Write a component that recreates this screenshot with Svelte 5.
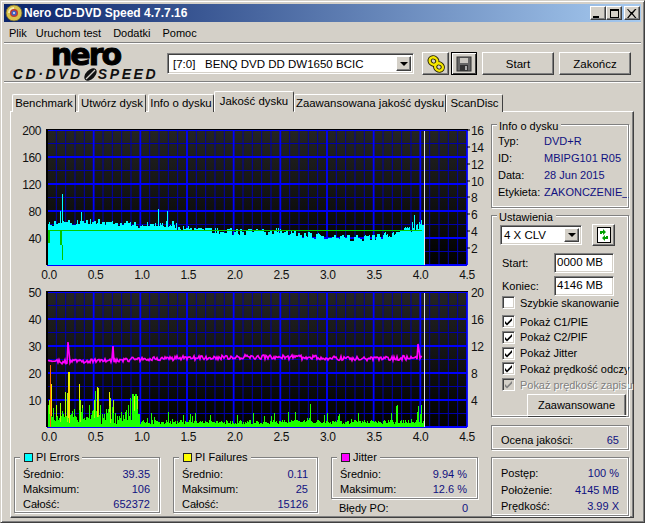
<script>
  function rng(seed) {
    return () => {
      seed = (seed + 0x6d2b79f5) | 0;
      let t = Math.imul(seed ^ (seed >>> 15), 1 | seed);
      t = (t + Math.imul(t ^ (t >>> 7), 61 | t)) ^ t;
      return ((t ^ (t >>> 14)) >>> 0) / 4294967296;
    };
  }
  function interp(pts, x) {
    for (let i = 1; i < pts.length; i++) {
      if (x <= pts[i][0]) {
        const [a, b] = pts[i - 1], [c, d] = pts[i];
        return b + ((d - b) * (x - a)) / (c - a);
      }
    }
    return pts[pts.length - 1][1];
  }
  const xOf = (v) => 47 + v * 93.33;
  const labelX = (v) => 49 + v * 92.9;
  const xTicks = [0, 0.5, 1, 1.5, 2, 2.5, 3, 3.5, 4, 4.5];
  const minorX = Array.from({ length: 46 }, (_, i) => 47 + i * 9.333);

  function grid(top) {
    const h = [];
    for (let i = 0; i <= 10; i++) h.push({ y: top + i * 13.5, major: i % 2 === 0 });
    return h;
  }
  const grid1 = grid(130);
  const grid2 = grid(292);

  // upper chart: PI errors
  const r1 = rng(11);
  const env1 = [[48, 224], [90, 222], [140, 225], [170, 224], [187, 229], [234, 232], [280, 231], [326, 238], [374, 238], [396, 233], [410, 229], [424, 225]];
  const spikes1 = { 49: 222, 62: 194, 60: 211, 81: 212, 158: 209, 167: 211, 414: 215, 421: 220, 412: 222, 419: 222 };
  let cyan = '';
  let held = 0;
  for (let x = 48; x < 424; x++) {
    if (x % 2 === 0 || r1() < 0.3) held = (r1() - 0.5) * 7;
    let y = Math.round(interp(env1, x) + held);
    if (spikes1[x]) y = spikes1[x];
    cyan += `M${x}.5 ${y}V265`;
  }
  // lower chart: PI failures + jitter
  const r2 = rng(29);
  const env3 = [[48, 362], [100, 361], [140, 359], [187, 358], [234, 357], [280, 357], [326, 358], [374, 359], [424, 357]];
  const jitterSpikes = { 68: 342, 69: 352, 113: 346, 418: 344, 419: 350 };
  let jitter = '';
  for (let x = 48; x < 423; x++) {
    const y = jitterSpikes[x] ?? +(interp(env3, x) + (r2() - 0.5) * 4.5).toFixed(1);
    jitter += `${x === 48 ? 'M' : 'L'}${x} ${y}`;
  }
  let green = '';
  for (let x = 48; x < 424; x++) {
    const early = x < 140;
    const burst = early ? (r2() < 0.55 ? 8 + r2() * 14 : 3 + r2() * 8) : r2() < 0.14 ? 7 + r2() * 8 : 3 + r2() * 4;
    green += `M${x}.5 ${427 - Math.round(burst)}V427`;
  }
  for (const [x, y] of [[95, 391], [130, 398], [132, 394], [133, 394], [135, 394], [136, 394], [310, 404], [396, 406], [397, 405], [418, 406], [421, 405]]) {
    green += `M${x}.5 ${y}V427`;
  }
  const lime = [[49, 400], [56, 405], [60, 403], [65, 392], [67, 393], [79, 392], [80, 400], [82, 405], [94, 400], [98, 388], [109, 392], [110, 398], [113, 400], [133, 395], [134, 410], [137, 396]];
  const yellows = [[51, 384], [69, 372], [68, 372], [79, 384], [97, 387], [109, 392], [134, 396]];

  const topRight = [[16, 130], [14, 147], [12, 164], [10, 181], [8, 197], [6, 214], [4, 231], [2, 248]];
</script>

{#snippet plot(top, rows, left, right, ticks)}
  <rect x="47" y={top} width="420" height="135" fill="url(#bg)" />
  {#each minorX as x, i}
    {#if i % 5 !== 0}
      <line x1={x} x2={x} y1={top} y2={top + 135} class="minor" />
    {/if}
  {/each}
  {#each rows as r}
    {#if !r.major}
      <line x1="47" x2="467" y1={r.y} y2={r.y} class="minor" />
    {/if}
  {/each}
  {#each xTicks as t}
    <line x1={xOf(t)} x2={xOf(t)} y1={top} y2={top + 135} class="major" />
  {/each}
  {#each rows as r}
    {#if r.major}
      <line x1="47" x2="467" y1={r.y} y2={r.y} class="major" />
    {/if}
  {/each}
  <rect x="46" y={top - 1} width="2" height="136" fill="#000" />
  <rect x="46" y={top - 1} width="422" height="1" fill="#000" />
  {#each left as [label, y]}
    <text x="41" y={y + 4.5} text-anchor="end">{label}</text>
  {/each}
  {#each right as [label, y]}
    {#if ticks}<line x1="467" x2="470" y1={y} y2={y} class="tick" />{/if}
    <text x="471" y={y + 4.5}>{label}</text>
  {/each}
  {#each xTicks as t}
    <text x={labelX(t)} y={top + 149} text-anchor="middle">{t.toFixed(1)}</text>
  {/each}
{/snippet}

{#snippet row(label, value)}
  <div class="row"><span>{label}</span><span class="val">{value}</span></div>
{/snippet}

{#snippet check(label, disabled = false, on = true)}
  <div class="check" class:disabled>
    <span class="box">
      {#if on}
        <svg width="11" height="11" viewBox="0 0 11 11"><path d="M2 5l2 2.2L9 2v2.6L4 9.6 2 7.4z" fill={disabled ? '#808080' : '#000'} /></svg>
      {/if}
    </span>
    <span>{label}</span>
  </div>
{/snippet}

<div class="win">
  <header class="title">
    <svg width="18" height="18" viewBox="0 0 18 18" class="appicon">
      <circle cx="9" cy="9" r="8" fill="#d8c14a" stroke="#6b6230" stroke-width=".8" />
      <path d="M3 9a6 6 0 0 1 6-6l0 6z" fill="#f4ecb0" />
      <circle cx="9" cy="9" r="4" fill="#c0392b" />
      <circle cx="9" cy="9" r="2.6" fill="#3d62c4" />
      <circle cx="9" cy="9" r="1" fill="#e8e8f0" />
    </svg>
    <span class="title-text">Nero CD-DVD Speed 4.7.7.16</span>
    <div class="winbtns">
      <button class="wb" aria-label="min"><i class="g-min"></i></button>
      <button class="wb" aria-label="max"><i class="g-max"></i></button>
      <button class="wb close" aria-label="close">
        <svg width="10" height="9" viewBox="0 0 10 9"><path d="M1 0l3 3 1 0 3-3h1.500L5.800 4.500 9.500 9H8L5 5.600H4.500L1.500 9H0l3.500-4.500L0 0z" fill="#000" /></svg>
      </button>
    </div>
  </header>

  <nav class="menu"><span>Plik</span><span>Uruchom test</span><span>Dodatki</span><span>Pomoc</span></nav>
  <div class="etch"></div>

  <section class="toolbar">
    <div class="logo">
      <div class="nero">nero</div>
      <div class="speed">
        <span>CD·DVD</span>
        <svg width="15" height="13" viewBox="0 0 15 13"><ellipse cx="7.500" cy="6.500" rx="7.500" ry="4.500" fill="#111" transform="rotate(-45 7.500 6.500)" /><path d="M3 11C6 8 8 6 12 2" stroke="#d4d0c8" stroke-width="1.300" fill="none" /></svg>
        <span>SPEED</span>
      </div>
    </div>
    <div class="combo drive">
      <span class="combo-text">[7:0]&nbsp;&nbsp; BENQ DVD DD DW1650 BCIC</span>
      <span class="drop"><i></i></span>
    </div>
    <button class="btn ico" aria-label="disc info">
      <svg width="20" height="18" viewBox="0 0 20 18">
        <g fill="none">
          <ellipse cx="7.500" cy="6" rx="4" ry="3.500" stroke="#2a2600" stroke-width="4.200" transform="rotate(35 7.500 6)" />
          <ellipse cx="13" cy="12" rx="4" ry="3.500" stroke="#2a2600" stroke-width="4.200" transform="rotate(35 13 12)" />
          <ellipse cx="7.500" cy="6" rx="4" ry="3.500" stroke="#f6e800" stroke-width="2.400" transform="rotate(35 7.500 6)" />
          <ellipse cx="13" cy="12" rx="4" ry="3.500" stroke="#f6e800" stroke-width="2.400" transform="rotate(35 13 12)" />
        </g>
      </svg>
    </button>
    <button class="btn ico default" aria-label="save">
      <svg width="16" height="16" viewBox="0 0 16 16">
        <rect x="1" y="1" width="14" height="14" fill="#666" stroke="#333" />
        <rect x="4" y="2" width="8" height="5" fill="#c9c6bf" />
        <rect x="4" y="9" width="8" height="6" fill="#333" />
        <rect x="9" y="10" width="2" height="4" fill="#aaa" />
      </svg>
    </button>
    <button class="btn act">Start</button>
    <button class="btn act">Zakończ</button>
  </section>
  <div class="etch"></div>

  <div class="tabs">
    <span class="tab w1">Benchmark</span>
    <span class="tab w2">Utwórz dysk</span>
    <span class="tab w3">Info o dysku</span>
    <span class="tab active">Jakość dysku</span>
    <span class="tab w5">Zaawansowana jakość dysku</span>
    <span class="tab w6">ScanDisc</span>
  </div>

  <main class="panel">
    <div class="left">
      <svg class="chart" width="480" height="162" viewBox="11 120 480 162">
        <defs>
          <linearGradient id="bg" x1="0" x2="0" y1="0" y2="1">
            <stop offset="0" stop-color="#242424" /><stop offset="1" stop-color="#000" />
          </linearGradient>
        </defs>
        {@render plot(130, grid1, [[200, 130], [160, 157], [120, 184], [80, 211], [40, 238]], topRight, true)}
        <path d={cyan} stroke="#00ffff" stroke-width="1" shape-rendering="crispEdges" />
        <path d="M48 230.500H422" stroke="#00d000" stroke-width="1" shape-rendering="crispEdges" />
        <path d="M48.500 230V243M49.500 230V243M60.500 230V245M61.500 230V245M62.500 245V260" stroke="#00c800" shape-rendering="crispEdges" />
        <line x1="424.500" x2="424.500" y1="131" y2="265" stroke="#e8e8e8" />
      </svg>
      <svg class="chart" width="480" height="162" viewBox="11 283 480 162">
        {@render plot(292, grid2, [[50, 292], [40, 319], [30, 346], [20, 373], [10, 400]], [[20, 292], [16, 319], [12, 346], [8, 373], [4, 400]], false)}
        <path d={jitter} stroke="#ff00ff" stroke-width="1.600" fill="none" />
        {#each yellows as [x, y]}
          <path d="M{x}.5 {y}V427" stroke="#ffd800" shape-rendering="crispEdges" />
        {/each}
        {#each lime as [x, y]}
          <path d="M{x}.5 {y}V427" stroke="#a0ff00" shape-rendering="crispEdges" />
        {/each}
        <path d={green} stroke="#1cff00" shape-rendering="crispEdges" />
        {#each yellows as [x, y]}
          <path d="M{x}.5 {y}V{y + 14}" stroke="#e8f000" shape-rendering="crispEdges" />
        {/each}
        <path d="M50.500 365V427" stroke="#ff6a00" shape-rendering="crispEdges" />
        <line x1="424.500" x2="424.500" y1="293" y2="427" stroke="#e8e8e8" />
      </svg>

      <div class="stats">
        <div class="group s1">
          <div class="legend"><i class="sw" style="background:#00ffff"></i>PI Errors</div>
          {@render row('Średnio:', '39.35')}
          {@render row('Maksimum:', '106')}
          {@render row('Całość:', '652372')}
        </div>
        <div class="group s2">
          <div class="legend"><i class="sw" style="background:#ffff00"></i>PI Failures</div>
          {@render row('Średnio:', '0.11')}
          {@render row('Maksimum:', '25')}
          {@render row('Całość:', '15126')}
        </div>
        <div class="s3">
          <div class="group jit">
            <div class="legend"><i class="sw" style="background:#ff00ff"></i>Jitter</div>
            {@render row('Średnio:', '9.94 %')}
            {@render row('Maksimum:', '12.6 %')}
          </div>
          <div class="po">{@render row('Błędy PO:', '0')}</div>
        </div>
      </div>
    </div>

    <aside class="side">
      <div class="group info">
        <div class="legend low">Info o dysku</div>
        <div class="irow"><span>Typ:</span><span class="val">DVD+R</span></div>
        <div class="irow"><span>ID:</span><span class="val">MBIPG101 R05</span></div>
        <div class="irow"><span>Data:</span><span class="val">28 Jun 2015</span></div>
        <div class="irow"><span>Etykieta:</span><span class="val">ZAKONCZENIE_</span></div>
      </div>

      <div class="group settings">
        <div class="legend low">Ustawienia</div>
        <div class="speedrow">
          <div class="combo small">
            <span class="combo-text">4 X CLV</span>
            <span class="drop"><i></i></span>
          </div>
          <button class="btn refresh" aria-label="refresh">
            <svg width="14" height="16" viewBox="0 0 14 16">
              <rect x=".5" y=".5" width="13" height="15" fill="#fff" stroke="#000" />
              <path d="M3 7V4h3V2l3 3-3 3V6H5v1z" fill="#00a000" />
              <path d="M11 9v3H8v2L5 11l3-3v2h1V9z" fill="#00a000" />
            </svg>
          </button>
        </div>
        <div class="field"><span>Start:</span><span class="input">0000 MB</span></div>
        <div class="field"><span>Koniec:</span><span class="input">4146 MB</span></div>
        <div class="checks">
          <div class="c0">{@render check('Szybkie skanowanie', false, false)}</div>
          {@render check('Pokaż C1/PIE')}
          {@render check('Pokaż C2/PIF')}
          {@render check('Pokaż Jitter')}
          {@render check('Pokaż prędkość odczy')}
          {@render check('Pokaż prędkość zapisu', true)}
        </div>
        <button class="btn adv">Zaawansowane</button>
      </div>

      <div class="group quality">{@render row('Ocena jakości:', '65')}</div>

      <div class="group progress">
        {@render row('Postęp:', '100 %')}
        {@render row('Położenie:', '4145 MB')}
        {@render row('Prędkość:', '3.99 X')}
      </div>
    </aside>
  </main>
</div>

<style>
  :global(body) { margin: 0; background: #d4d0c8; }
  .win {
    width: 645px; height: 523px; box-sizing: border-box; overflow: hidden;
    background: #d4d0c8; color: #000;
    font: 11px "Liberation Sans", Arial, sans-serif;
    border: 1px solid; border-color: #d4d0c8 #404040 #404040 #d4d0c8;
    box-shadow: inset 1px 1px 0 #fff, inset -1px -1px 0 #808080;
    padding: 3px;
    display: flex; flex-direction: column;
  }
  .title {
    height: 18px; flex: none; display: flex; align-items: center; padding-left: 1px;
    background: linear-gradient(90deg, #0a246a, #a6caf0);
    color: #fff;
  }
  .appicon { margin-right: 1px; }
  .title-text { font-weight: bold; font-size: 12px; }
  .winbtns { margin-left: auto; display: flex; margin-right: 1px; }
  .wb {
    width: 16px; height: 14px; padding: 0; background: #d4d0c8; border: 1px solid;
    border-color: #fff #404040 #404040 #fff; box-shadow: inset -1px -1px 0 #808080;
    display: flex; align-items: center; justify-content: center; position: relative;
  }
  .close { margin-left: 2px; }
  .g-min { width: 6px; height: 2px; background: #000; margin-top: 7px; margin-right: 4px; }
  .g-max { width: 7px; height: 6px; border: 1px solid #000; border-top-width: 2px; }
  .menu { height: 19px; margin-top: 1px; flex: none; display: flex; align-items: center; padding-left: 5px; }
  .menu span:nth-child(2) { margin-left: 9px; }
  .menu span:nth-child(3) { margin-left: 12px; }
  .menu span:nth-child(4) { margin-left: 12px; }
  .etch { flex: none; height: 1px; background: #808080; border-bottom: 1px solid #fff; }
  .toolbar { height: 37px; flex: none; display: flex; align-items: center; }
  .toolbar > .btn, .toolbar > .combo { margin-top: 2px; }
  .logo { width: 163px; flex: none; display: flex; flex-direction: column; align-items: center; height: 37px; }
  .nero {
    font: bold 30px/22px "DejaVu Sans", sans-serif; color: #000; -webkit-text-stroke: 1px #000;
    letter-spacing: -2px; height: 22px;
  }
  .speed {
    display: flex; align-items: center; height: 13px; margin-top: 2px; margin-left: 0;
    font: italic bold 14px/13px "Liberation Sans", sans-serif; color: #111; letter-spacing: 2.6px;
  }
  .combo {
    background: #fff; border: 1px solid; border-color: #808080 #fff #fff #808080;
    box-shadow: inset 1px 1px 0 #404040, inset -1px -1px 0 #d4d0c8;
    display: flex; align-items: center; box-sizing: border-box; padding: 2px;
  }
  .combo-text { flex: 1; padding-left: 3px; white-space: pre; }
  .drive { width: 247px; height: 21px; flex: none; font-size: 11.5px; }
  .drop {
    width: 15px; height: 100%; flex: none; background: #d4d0c8; box-sizing: border-box; border: 1px solid;
    border-color: #fff #404040 #404040 #fff; box-shadow: inset -1px -1px 0 #808080;
    display: flex; align-items: center; justify-content: center;
  }
  .drop i { border: 4px solid transparent; border-top: 4px solid #000; border-bottom: 0; }
  .btn {
    background: #d4d0c8; font: inherit; color: #000; padding: 0; box-sizing: border-box;
    border: 1px solid; border-color: #fff #404040 #404040 #fff; box-shadow: inset -1px -1px 0 #808080;
    display: flex; align-items: center; justify-content: center;
  }
  .ico { width: 27px; height: 23px; flex: none; margin-left: 3px; }
  .toolbar .combo + .ico { margin-left: 8px; }
  .default { width: 26px; border: 1px solid #000; box-shadow: inset 1px 1px 0 #fff, inset -1px -1px 0 #404040; margin-left: 2px; }
  .act { width: 72px; height: 23px; flex: none; margin-left: 5px; font-size: 11.5px; }
  .tabs { flex: none; height: 21px; margin-top: 8px; display: flex; align-items: flex-end; padding-left: 8px; position: relative; z-index: 1; margin-bottom: -1px; font-size: 11.4px; }
  .tab {
    height: 18px; box-sizing: border-box; background: #d4d0c8; text-align: center; line-height: 17px; flex: none;
    border: 1px solid #fff; border-right: 1px solid #404040; border-bottom: 0; border-radius: 2px 2px 0 0;
    margin-right: 2px; white-space: nowrap;
  }
  .w1 { width: 64px; } .w2 { width: 68px; } .w3 { width: 66px; margin-right: 0; }
  .active { width: 80px; height: 21px; line-height: 19px; border-bottom: 1px solid #d4d0c8; margin-right: 0; }
  .w5 { width: 152px; margin-right: 0; } .w6 { width: 57px; }
  .panel {
    width: 624px; margin-left: 6px; height: 407px; flex: none; box-sizing: border-box;
    border: 1px solid; border-color: #fff #404040 #404040 #fff; box-shadow: inset -1px -1px 0 #808080;
    display: flex; padding-top: 8px;
  }
  .left { width: 480px; flex: none; }
  .chart { display: block; font: 12px "Liberation Sans", sans-serif; letter-spacing: -.4px; }
  .chart + .chart { margin-top: 1px; }
  .chart text { fill: #111; }
  .minor { stroke: #0000a8; stroke-width: 1; }
  .major { stroke: #0000ff; stroke-width: 1.800; }
  .tick { stroke: #000; }
  .group {
    position: relative; box-sizing: border-box;
    border: 1px solid #808080; outline: 1px solid #fff; outline-offset: -2px;
    box-shadow: 1px 1px 0 #fff;
  }
  .legend { position: absolute; top: -7px; left: 5px; background: #d4d0c8; padding: 0 3px 0 2px; line-height: 13px; display: flex; align-items: center; white-space: nowrap; }
  .legend.low { top: -5px; }
  .sw { width: 7px; height: 7px; border: 1px solid #222; margin: 0 3px 0 2px; display: block; }
  .stats { display: flex; gap: 13px; padding-left: 3px; margin-top: 12px; align-items: flex-start; }
  .row { display: flex; justify-content: space-between; height: 15px; line-height: 15px; }
  .val { color: #101080; }
  .s1 { width: 146px; height: 56px; padding: 9px 9px 0 8px; }
  .s2 { width: 145px; height: 56px; padding: 9px 9px 0 8px; }
  .s3 { width: 147px; }
  .jit { height: 42px; padding: 9px 10px 0 8px; }
  .po { padding: 2px 10px 0 8px; }
  .side { width: 138px; flex: none; margin-top: 4px; display: flex; flex-direction: column; gap: 7px; }
  .info { height: 84px; padding: 8px 6px; }
  .irow { display: flex; height: 17px; line-height: 16px; white-space: nowrap; }
  .irow span:first-child { width: 46px; flex: none; }
  .settings { height: 202px; padding: 8px 0 0 8px; }
  .speedrow { display: flex; align-items: center; gap: 10px; }
  .small { width: 82px; height: 20px; font-size: 11.5px; }
  .small .combo-text { padding-left: 1px; }
  .refresh { width: 23px; height: 22px; }
  .field { display: flex; align-items: center; height: 23px; padding-left: 2px; justify-content: space-between; width: 112px; }
  .speedrow + .field { margin-top: 5px; }
  .input {
    width: 60px; height: 20px; box-sizing: border-box; background: #fff; line-height: 17px; padding-left: 2px; font-size: 11.5px;
    border: 1px solid; border-color: #808080 #fff #fff #808080; box-shadow: inset 1px 1px 0 #404040, inset -1px -1px 0 #d4d0c8;
  }
  .checks { display: flex; flex-direction: column; margin-top: -2px; }
  .c0 { margin-bottom: 3px; }
  .check { display: flex; align-items: center; height: 15.750px; gap: 5px; white-space: nowrap; padding-left: 2px; letter-spacing: -.03px; }
  .box {
    width: 13px; height: 13px; box-sizing: border-box; background: #fff; flex: none;
    border: 1px solid; border-color: #808080 #fff #fff #808080; box-shadow: inset 1px 1px 0 #404040, inset -1px -1px 0 #d4d0c8;
    display: flex; align-items: center; justify-content: center;
  }
  .disabled { color: #808080; text-shadow: 1px 1px 0 #fff; }
  .disabled .box { background: #d4d0c8; }
  .adv { width: 99px; height: 23px; margin: 1px 0 0 27px; }
  .quality { height: 25px; padding: 7px 9px 0 9px; margin-top: 1px; }
  .progress { height: 59px; padding: 7px 9px 0 9px; }
  .progress .row { height: 16.500px; line-height: 16px; }
</style>
